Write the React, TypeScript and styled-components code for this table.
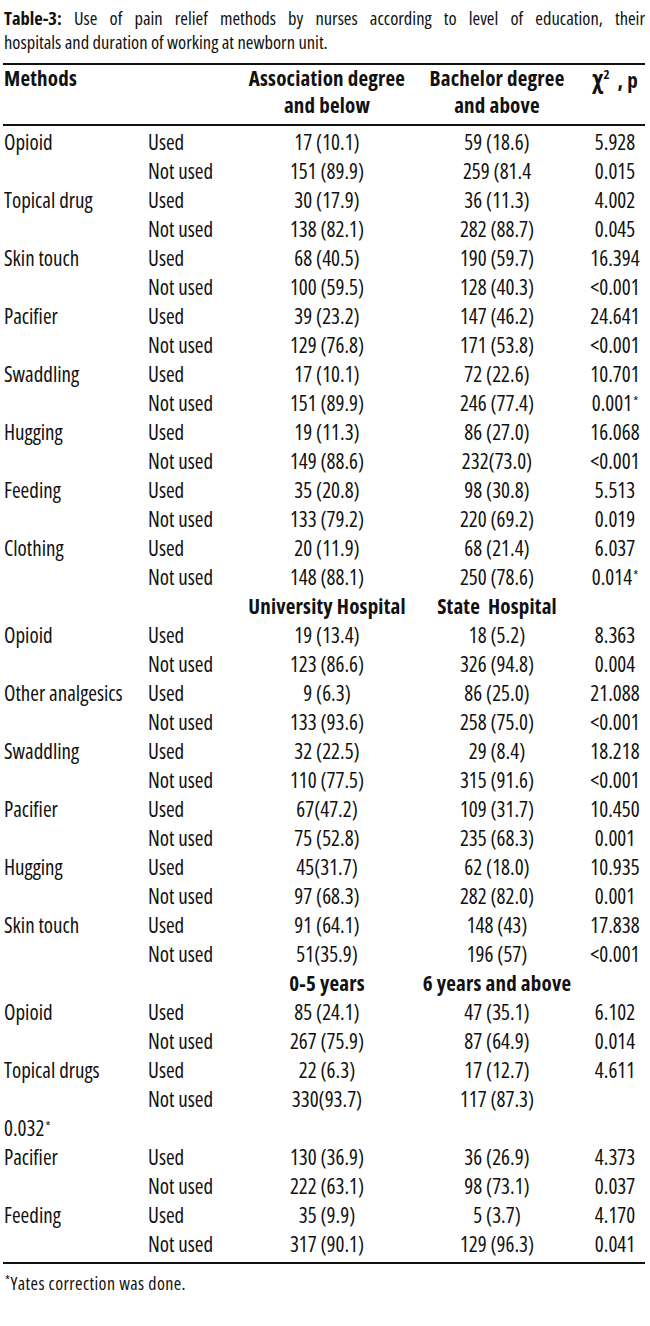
import React from "react";
import styled, { createGlobalStyle } from "styled-components";

const Global = createGlobalStyle`
  html, body { margin: 0; padding: 0; background: #fff; }
  body {
    font-family: "Open Sans", "DejaVu Sans Condensed", sans-serif;
    font-stretch: 75%;
    color: #111;
  }
`;

const Page = styled.div`
  width: 650px;
  padding: 6px 0 0 0;
  box-sizing: border-box;
`;

const Caption = styled.div`
  width: 641px;
  padding-left: 4px;
  font-size: 18.5px;
  line-height: 24px;
  white-space: nowrap;
`;

const CaptionLine = styled.div<{ $justify?: boolean }>`
  text-align: ${(p) => (p.$justify ? "justify" : "left")};
  text-align-last: ${(p) => (p.$justify ? "justify" : "auto")};
  white-space: normal;
`;

const CaptionLabel = styled.b`
  font-weight: 700;
`;

const Table = styled.div`
  margin: 9px 5px 0 3px;
  border-top: 2px solid #111;
  border-bottom: 2px solid #111;
`;

const Header = styled.div`
  display: grid;
  grid-template-columns: 145px 100px 158px 182px 54px;
  font-weight: 700;
  font-size: 21px;
  letter-spacing: 0.2px;
  line-height: 27px;
  padding-bottom: 5px;
  border-bottom: 2px solid #111;
`;

const Body = styled.div`
  padding: 1px 0 3px 0;
`;

const Row = styled.div<{ $bold?: boolean }>`
  display: grid;
  grid-template-columns: 145px 100px 158px 182px 54px;
  height: 29.03px;
  align-items: center;
  font-size: 21px;
  letter-spacing: ${(p) => (p.$bold ? "0.2px" : "0")};
  font-weight: ${(p) => (p.$bold ? 700 : 400)};
  white-space: nowrap;
`;

const Cell = styled.div<{ $center?: boolean; $first?: boolean; $pre?: boolean }>`
  text-align: ${(p) => (p.$center ? "center" : "left")};
  padding-left: ${(p) => (p.$first ? "1px" : "0")};
  white-space: ${(p) => (p.$pre ? "pre" : "nowrap")};
`;

const Chi = styled.span`
  font-size: 24px;
  font-weight: 700;
`;

const Sup = styled.sup`
  font-size: 13px;
  vertical-align: 9px;
  line-height: 0;
`;

const Star = styled.span`
  font-size: 13px;
  position: relative;
  top: -5px;
  margin-left: 1px;
`;

const Note = styled.div`
  padding: 7px 0 0 4px;
  font-size: 18px;
  letter-spacing: 0.4px;
  line-height: 24px;
`;

type DataRow =
  | { kind: "data"; m?: string; u: string; a: string; b: string; p: string; star?: boolean }
  | { kind: "group"; a: string; b: string }
  | { kind: "loose"; text: string };

const d = (m: string | undefined, u: string, a: string, b: string, p: string, star?: boolean): DataRow => ({
  kind: "data",
  m,
  u,
  a,
  b,
  p,
  star,
});

const rows: DataRow[] = [
  d("Opioid", "Used", "17 (10.1)", "59 (18.6)", "5.928"),
  d(undefined, "Not used", "151 (89.9)", "259 (81.4", "0.015"),
  d("Topical drug", "Used", "30 (17.9)", "36 (11.3)", "4.002"),
  d(undefined, "Not used", "138 (82.1)", "282 (88.7)", "0.045"),
  d("Skin touch", "Used", "68 (40.5)", "190 (59.7)", "16.394"),
  d(undefined, "Not used", "100 (59.5)", "128 (40.3)", "<0.001"),
  d("Pacifier", "Used", "39 (23.2)", "147 (46.2)", "24.641"),
  d(undefined, "Not used", "129 (76.8)", "171 (53.8)", "<0.001"),
  d("Swaddling", "Used", "17 (10.1)", "72 (22.6)", "10.701"),
  d(undefined, "Not used", "151 (89.9)", "246 (77.4)", "0.001", true),
  d("Hugging", "Used", "19 (11.3)", "86 (27.0)", "16.068"),
  d(undefined, "Not used", "149 (88.6)", "232(73.0)", "<0.001"),
  d("Feeding", "Used", "35 (20.8)", "98 (30.8)", "5.513"),
  d(undefined, "Not used", "133 (79.2)", "220 (69.2)", "0.019"),
  d("Clothing", "Used", "20 (11.9)", "68 (21.4)", "6.037"),
  d(undefined, "Not used", "148 (88.1)", "250 (78.6)", "0.014", true),
  { kind: "group", a: "University Hospital", b: "State  Hospital" },
  d("Opioid", "Used", "19 (13.4)", "18 (5.2)", "8.363"),
  d(undefined, "Not used", "123 (86.6)", "326 (94.8)", "0.004"),
  d("Other analgesics", "Used", "9 (6.3)", "86 (25.0)", "21.088"),
  d(undefined, "Not used", "133 (93.6)", "258 (75.0)", "<0.001"),
  d("Swaddling", "Used", "32 (22.5)", "29 (8.4)", "18.218"),
  d(undefined, "Not used", "110 (77.5)", "315 (91.6)", "<0.001"),
  d("Pacifier", "Used", "67(47.2)", "109 (31.7)", "10.450"),
  d(undefined, "Not used", "75 (52.8)", "235 (68.3)", "0.001"),
  d("Hugging", "Used", "45(31.7)", "62 (18.0)", "10.935"),
  d(undefined, "Not used", "97 (68.3)", "282 (82.0)", "0.001"),
  d("Skin touch", "Used", "91 (64.1)", "148 (43)", "17.838"),
  d(undefined, "Not used", "51(35.9)", "196 (57)", "<0.001"),
  { kind: "group", a: "0-5 years", b: "6 years and above" },
  d("Opioid", "Used", "85 (24.1)", "47 (35.1)", "6.102"),
  d(undefined, "Not used", "267 (75.9)", "87 (64.9)", "0.014"),
  d("Topical drugs", "Used", "22 (6.3)", "17 (12.7)", "4.611"),
  d(undefined, "Not used", "330(93.7)", "117 (87.3)", ""),
  { kind: "loose", text: "0.032" },
  d("Pacifier", "Used", "130 (36.9)", "36 (26.9)", "4.373"),
  d(undefined, "Not used", "222 (63.1)", "98 (73.1)", "0.037"),
  d("Feeding", "Used", "35 (9.9)", "5 (3.7)", "4.170"),
  d(undefined, "Not used", "317 (90.1)", "129 (96.3)", "0.041"),
];

export default function App() {
  return (
    <Page>
      <Global />
      <Caption>
        <CaptionLine $justify>
          <CaptionLabel>Table-3:</CaptionLabel> Use of pain relief methods by nurses according to level of education, their
        </CaptionLine>
        <CaptionLine>hospitals and duration of working at newborn unit.</CaptionLine>
      </Caption>
      <Table>
        <Header>
          <Cell $first>Methods</Cell>
          <Cell />
          <Cell $center>
            Association degree
            <br />
            and below
          </Cell>
          <Cell $center>
            Bachelor degree
            <br />
            and above
          </Cell>
          <Cell $center>
            <Chi>χ</Chi>
            <Sup>2</Sup> &nbsp;, p
          </Cell>
        </Header>
        <Body>
          {rows.map((r, i) => {
            if (r.kind === "group") {
              return (
                <Row key={i} $bold>
                  <Cell $first />
                  <Cell />
                  <Cell $center>{r.a}</Cell>
                  <Cell $center $pre>{r.b}</Cell>
                  <Cell />
                </Row>
              );
            }
            if (r.kind === "loose") {
              return (
                <Row key={i}>
                  <Cell $first>
                    {r.text}
                    <Star>*</Star>
                  </Cell>
                </Row>
              );
            }
            return (
              <Row key={i}>
                <Cell $first>{r.m ?? ""}</Cell>
                <Cell>{r.u}</Cell>
                <Cell $center>{r.a}</Cell>
                <Cell $center>{r.b}</Cell>
                <Cell $center>
                  {r.p}
                  {r.star ? <Star>*</Star> : null}
                </Cell>
              </Row>
            );
          })}
        </Body>
      </Table>
      <Note>
        <Star>*</Star>Yates correction was done.
      </Note>
    </Page>
  );
}
